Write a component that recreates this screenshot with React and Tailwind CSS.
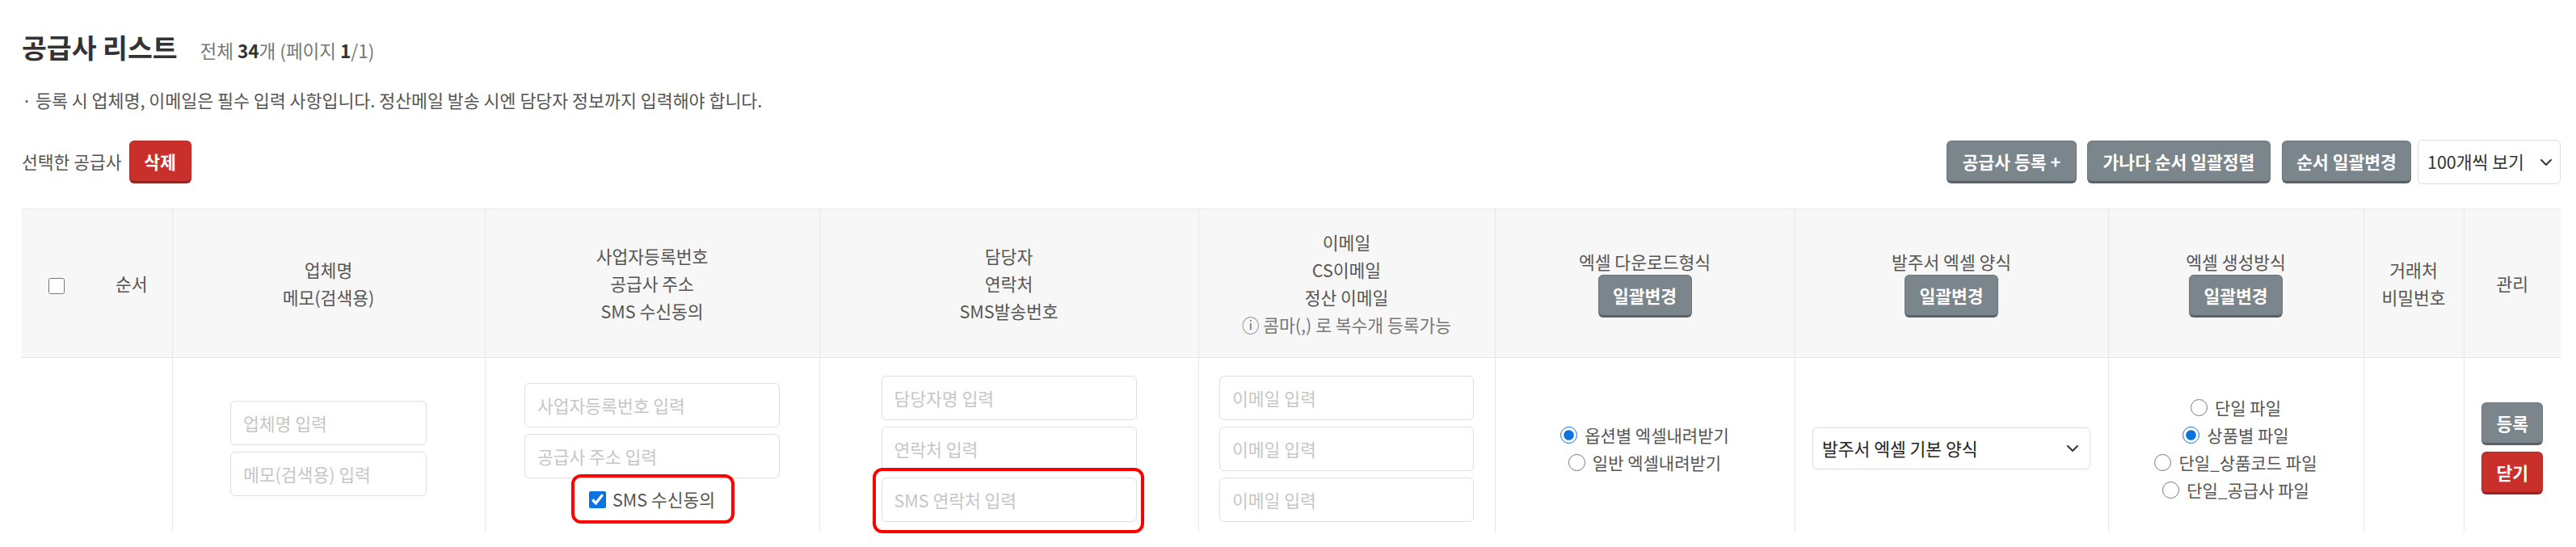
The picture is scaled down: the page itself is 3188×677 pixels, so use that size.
import React from "react";

function Chevron({ className = "" }) {
  return (
    <svg
      className={className}
      width="16"
      height="10"
      viewBox="0 0 16 10"
      fill="none"
      stroke="#333"
      strokeWidth="2"
      strokeLinecap="round"
      strokeLinejoin="round"
    >
      <path d="M2 2l6 6 6-6" />
    </svg>
  );
}

function GrayBtn({ children, className = "" }) {
  return (
    <button
      type="button"
      className={
        "inline-flex items-center justify-center h-[53px] px-[18px] rounded-[6px] bg-[#7b858c] border border-[#6c757b] border-b-[3px] border-b-[#596167] text-white font-bold text-[21.5px] leading-none whitespace-nowrap " +
        className
      }
    >
      {children}
    </button>
  );
}

function RedBtn({ children, className = "" }) {
  return (
    <button
      type="button"
      className={
        "inline-flex items-center justify-center h-[53px] px-[18px] rounded-[6px] bg-[#c9302c] border border-[#b02a26] border-b-[3px] border-b-[#962420] text-white font-bold text-[21.5px] leading-none whitespace-nowrap " +
        className
      }
    >
      {children}
    </button>
  );
}

function TextInput({ placeholder, className = "" }) {
  return (
    <input
      type="text"
      placeholder={placeholder}
      className={
        "h-[55px] border border-[#dedede] rounded-[6px] px-[15px] text-[21.5px] text-[#333] bg-white placeholder:text-[#c6c6c6] outline-none " +
        className
      }
    />
  );
}

function Radio({ label, checked = false, name }) {
  return (
    <label className="inline-flex items-center gap-[9px] h-[34px] text-[21px] text-[#555] whitespace-nowrap">
      <input
        type="radio"
        name={name}
        defaultChecked={checked}
        className="m-0 w-[21px] h-[21px] accent-[#0b72e0]"
      />
      {label}
    </label>
  );
}

const th =
  "bg-[#f7f7f7] border-l border-[#e8e8e8] text-[#555] text-[21.5px] leading-[34px] text-center align-middle font-normal";
const thNoBorder =
  "bg-[#f7f7f7] text-[#555] text-[21.5px] leading-[34px] text-center align-middle font-normal";
const td = "border-l border-[#e8e8e8] align-middle text-center pt-[10px]";

export default function App() {
  return (
    <div className="min-h-[677px] bg-white pl-[27px] pr-[19px] pt-[38px] font-['Noto_Sans_CJK_KR','Noto_Sans',sans-serif]">
      {/* Title */}
      <div className="flex items-baseline gap-[28px] h-[40px]">
        <h1 className="text-[33.5px] font-bold leading-[40px] text-[#333]">공급사 리스트</h1>
        <div className="text-[22.5px] leading-[40px] text-[#777]">
          전체 <span className="font-bold text-[#333]">34</span>개 (페이지{" "}
          <span className="font-bold text-[#333]">1</span>/1)
        </div>
      </div>

      {/* Note */}
      <p className="mt-[31px] text-[21.7px] leading-[30px] text-[#555]">
        · 등록 시 업체명, 이메일은 필수 입력 사항입니다. 정산메일 발송 시엔 담당자 정보까지 입력해야 합니다.
      </p>

      {/* Action row */}
      <div className="mt-[34px] flex items-center justify-between h-[55px]">
        <div className="flex items-center gap-[9px]">
          <span className="text-[21.5px] text-[#555]">선택한 공급사</span>
          <RedBtn className="w-[77px] px-0">삭제</RedBtn>
        </div>
        <div className="flex items-center">
          <GrayBtn className="w-[161px] px-0">공급사 등록 +</GrayBtn>
          <GrayBtn className="ml-[13px] w-[227px] px-0">가나다 순서 일괄정렬</GrayBtn>
          <GrayBtn className="ml-[14px] w-[160px] px-0">순서 일괄변경</GrayBtn>
          <div className="relative ml-[8px] w-[177px] h-[55px]">
            <select className="appearance-none w-full h-full border border-[#dcdcdc] rounded-[6px] pl-[11px] text-[21.5px] text-[#333] bg-white outline-none">
              <option>100개씩 보기</option>
            </select>
            <Chevron className="absolute right-[10px] top-[23px] pointer-events-none" />
          </div>
        </div>
      </div>

      {/* Table */}
      <table className="mt-[30px] w-full table-fixed border-collapse">
        <colgroup>
          <col className="w-[86px]" />
          <col className="w-[100px]" />
          <col className="w-[387px]" />
          <col className="w-[414px]" />
          <col className="w-[469px]" />
          <col className="w-[367px]" />
          <col className="w-[371px]" />
          <col className="w-[388px]" />
          <col className="w-[316px]" />
          <col className="w-[124px]" />
          <col className="w-[120px]" />
        </colgroup>
        <thead>
          <tr className="h-[184px] border-t border-[#ececec] border-b border-b-[#e4e4e4]">
            <th className={thNoBorder}>
              <input type="checkbox" className="m-0 w-[20px] h-[20px] align-middle" />
            </th>
            <th className={thNoBorder}>순서</th>
            <th className={th}>
              업체명
              <br />
              메모(검색용)
            </th>
            <th className={th}>
              사업자등록번호
              <br />
              공급사 주소
              <br />
              SMS 수신동의
            </th>
            <th className={th}>
              담당자
              <br />
              연락처
              <br />
              SMS발송번호
            </th>
            <th className={th}>
              이메일
              <br />
              CS이메일
              <br />
              정산 이메일
              <br />
              <span className="text-[#777]">ⓘ 콤마(,) 로 복수개 등록가능</span>
            </th>
            <th className={th}>
              <div className="flex flex-col items-center">
                <span className="leading-[32px]">엑셀 다운로드형식</span>
                <GrayBtn className="w-[116px] px-0">일괄변경</GrayBtn>
              </div>
            </th>
            <th className={th}>
              <div className="flex flex-col items-center">
                <span className="leading-[32px]">발주서 엑셀 양식</span>
                <GrayBtn className="w-[116px] px-0">일괄변경</GrayBtn>
              </div>
            </th>
            <th className={th}>
              <div className="flex flex-col items-center">
                <span className="leading-[32px]">엑셀 생성방식</span>
                <GrayBtn className="w-[116px] px-0">일괄변경</GrayBtn>
              </div>
            </th>
            <th className={th}>
              거래처
              <br />
              비밀번호
            </th>
            <th className={th}>관리</th>
          </tr>
        </thead>
        <tbody>
          <tr className="h-[215px]">
            <td className="align-middle"></td>
            <td className="align-middle"></td>
            <td className={td}>
              <div className="flex flex-col items-center gap-[8px]">
                <TextInput placeholder="업체명 입력" className="w-[243px]" />
                <TextInput placeholder="메모(검색용) 입력" className="w-[243px]" />
              </div>
            </td>
            <td className={td}>
              <div className="flex flex-col items-center gap-[8px]">
                <TextInput placeholder="사업자등록번호 입력" className="w-[316px]" />
                <TextInput placeholder="공급사 주소 입력" className="w-[316px]" />
                <div className="relative h-[36px] flex items-center">
                  <label className="inline-flex items-center gap-[8px] text-[21.5px] text-[#555]">
                    <input
                      type="checkbox"
                      defaultChecked
                      className="m-0 w-[21px] h-[21px] accent-[#0b72e0]"
                    />
                    SMS 수신동의
                  </label>
                  <div className="absolute -left-[22px] -right-[24px] -top-[13px] -bottom-[12px] border-[4px] border-[#ff0000] rounded-[12px] pointer-events-none"></div>
                </div>
              </div>
            </td>
            <td className={td}>
              <div className="flex flex-col items-center gap-[8px]">
                <TextInput placeholder="담당자명 입력" className="w-[316px]" />
                <TextInput placeholder="연락처 입력" className="w-[316px]" />
                <div className="relative">
                  <TextInput placeholder="SMS 연락처 입력" className="w-[316px] block" />
                  <div className="absolute -left-[11px] -right-[9px] -top-[12px] -bottom-[14px] border-[4px] border-[#ff0000] rounded-[12px] pointer-events-none"></div>
                </div>
              </div>
            </td>
            <td className={td}>
              <div className="flex flex-col items-center gap-[8px]">
                <TextInput placeholder="이메일 입력" className="w-[315px]" />
                <TextInput placeholder="이메일 입력" className="w-[315px]" />
                <TextInput placeholder="이메일 입력" className="w-[315px]" />
              </div>
            </td>
            <td className={td}>
              <div className="flex flex-col items-center">
                <Radio name="dl" label="옵션별 엑셀내려받기" checked />
                <Radio name="dl" label="일반 엑셀내려받기" />
              </div>
            </td>
            <td className={td}>
              <div className="flex justify-center">
                <div className="relative w-[344px] h-[52px]">
                  <select className="appearance-none w-full h-full border border-[#dcdcdc] rounded-[6px] pl-[11px] text-[21.5px] text-[#222] bg-white outline-none">
                    <option>발주서 엑셀 기본 양식</option>
                  </select>
                  <Chevron className="absolute right-[14px] top-[21px] pointer-events-none" />
                </div>
              </div>
            </td>
            <td className={td}>
              <div className="flex flex-col items-center">
                <Radio name="gen" label="단일 파일" />
                <Radio name="gen" label="상품별 파일" checked />
                <Radio name="gen" label="단일_상품코드 파일" />
                <Radio name="gen" label="단일_공급사 파일" />
              </div>
            </td>
            <td className={td}></td>
            <td className={td}>
              <div className="flex flex-col items-center gap-[8px]">
                <GrayBtn className="w-[76px] px-0">등록</GrayBtn>
                <RedBtn className="w-[76px] px-0">닫기</RedBtn>
              </div>
            </td>
          </tr>
        </tbody>
      </table>
    </div>
  );
}
